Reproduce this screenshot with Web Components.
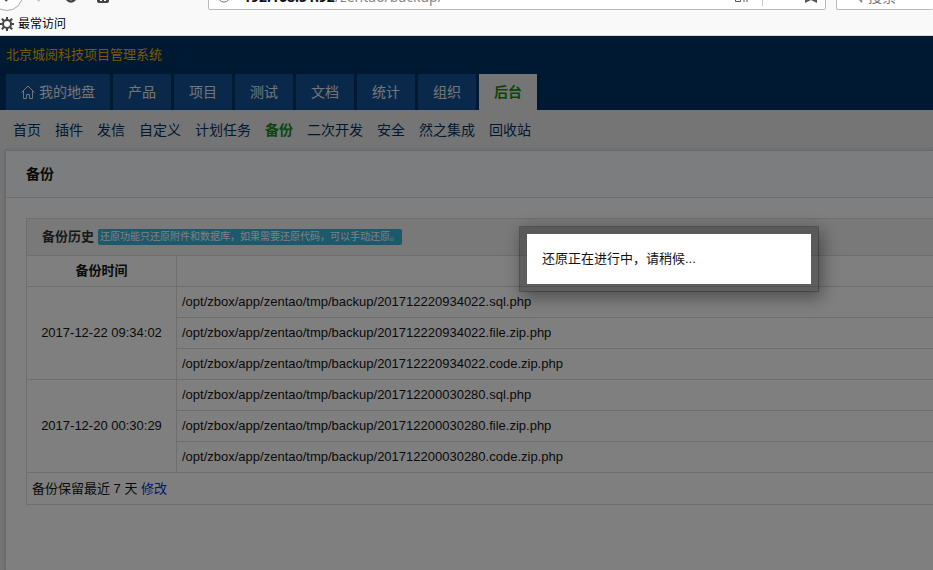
<!DOCTYPE html>
<html lang="zh-CN">
<head>
<meta charset="utf-8">
<title>备份 - 北京城阅科技项目管理系统</title>
<style>
  html, body {
    margin: 0;
    min-height: 100%;
  }

  body {
    font-family: "Liberation Sans", "Noto Sans CJK SC", sans-serif;
    font-size: 13px;
    line-height: 20px;
    color: #141414;
  }
</style>
</head>
<body>
<backup-page></backup-page>

<script>
/**
 * Browser chrome: the lower edge of the address bar and the bookmarks row
 */
class BrowserBar extends HTMLElement {
  constructor() {
    super();
    this.attachShadow({ mode: 'open' });
  }

  connectedCallback() {
    this.shadowRoot.innerHTML = `
      <style>
        :host {
          display: block;
          flex: none;
          height: 35px;
          background: #f9f9f9;
          border-bottom: 1px solid #d9d9d9;
          overflow: hidden;
        }

        .toolbar {
          display: flex;
          align-items: flex-end;
          height: 11px;
          overflow: hidden;
        }

        .buttons {
          flex: none;
          width: 208px;
          height: 11px;
        }

        .field {
          display: flex;
          align-items: center;
          box-sizing: border-box;
          height: 26px;
          margin-bottom: 1px;
          flex: none;
          border: 1px solid #bbb;
          border-radius: 2px;
          background: white;
        }

        .address {
          flex: 1;
          min-width: 0;
          margin-right: 10px;
          padding: 0 7px 0 8px;
          gap: 12px;
        }

        .search {
          width: 97px;
          border-right: none;
          padding-left: 18px;
          gap: 5px;
        }

        input {
          border: none;
          padding: 0;
          min-width: 0;
          background: none;
          font: 14px/20px "Liberation Sans", "Noto Sans CJK SC", sans-serif;
          width: 60px;
        }

        .url {
          flex: 1;
          font-family: "Noto Sans", sans-serif;
          font-size: 14px;
          color: #888;
          white-space: nowrap;
        }

        .url b {
          color: #111;
        }

        .divider {
          width: 1px;
          height: 18px;
          background: #ccc;
        }

        svg {
          display: block;
          flex: none;
        }

        .bookmarks {
          display: flex;
          align-items: center;
          gap: 4px;
          height: 26px;
          font-size: 12px;
          color: #000;
        }

        .bookmarks a {
          color: inherit;
          text-decoration: none;
        }
      </style>

      <div class="toolbar">
        <svg class="buttons" viewBox="0 0 208 11">
          <circle cx="7" cy="-5" r="15.500" fill="#fdfdfd" stroke="#aaa"/>
          <path d="M2-4 L7 1" stroke="#444" stroke-width="2"/>
          <path d="M38 1 L42-3" stroke="#bbb" stroke-width="2"/>
          <circle cx="71" cy="-3" r="4.500" fill="none" stroke="#444" stroke-width="2.500"/>
          <path d="M97-4h12v5a2 2 0 0 1-2 2h-8a2 2 0 0 1-2-2z" fill="#444"/>
          <path d="M100 1v-2h2v2zM104 1v-2h2v2z" fill="#f9f9f9"/>
        </svg>
        <div class="field address">
          <svg width="14" height="14" viewBox="0 0 14 14"><circle cx="7" cy="6" r="6" fill="none" stroke="#777"/></svg>
          <span class="url"><b>192.168.51.92</b>/zentao/backup/</span>
          <svg width="16" height="14" viewBox="0 0 16 14" fill="none" stroke="#555"><path d="M1.500 6.500h5v5h-5zM1.500.5h5v4h-5zM10 12V7h3v5"/></svg>
          <span class="divider"></span>
          <svg width="43" height="14" viewBox="0 0 43 14"><path d="M30 0h12v13l-6-3-6 3z" fill="#555"/></svg>
        </div>
        <div class="field search">
          <svg width="8" height="14" viewBox="0 0 8 14"><path d="M2 6l5 6" stroke="#888" stroke-width="2"/></svg>
          <input type="text" placeholder="搜索" aria-label="搜索">
        </div>
      </div>
      <div class="bookmarks">
        <svg width="14" height="14" viewBox="-7 -7 14 14">
          <circle r="4" fill="none" stroke="#444" stroke-width="2"/>
          <path d="M0-4.500V-7M0 4.500V7M4.500 0H7M-4.500 0H-7M3.200-3.200l2-2M-3.200-3.200l-2-2M3.200 3.200l2 2M-3.200 3.200l-2 2" stroke="#444" stroke-width="2"/>
        </svg>
        <a href="#">最常访问</a>
      </div>
    `;
  }
}

/**
 * Main menu tab
 */
class MenuTab extends HTMLElement {
  constructor() {
    super();
    this.attachShadow({ mode: 'open' });
  }

  connectedCallback() {
    this.shadowRoot.innerHTML = `
      <style>
        :host {
          display: block;
        }

        a {
          display: flex;
          align-items: center;
          gap: 4px;
          height: 36px;
          padding: 0 15px;
          background: #145294;
          color: #e8eaec;
          font-size: 14px;
          text-decoration: none;
          white-space: nowrap;
        }

        :host([active]) a {
          background: #ebebeb;
          color: #1a8a1a;
          font-weight: 700;
        }
      </style>
      <a href="#"><slot></slot></a>
    `;
  }
}

class SiteHeader extends HTMLElement {
  constructor() {
    super();
    this.attachShadow({ mode: 'open' });
  }

  connectedCallback() {
    const tabs = ['产品', '项目', '测试', '文档', '统计', '组织'];
    const modules = ['首页', '插件', '发信', '自定义', '计划任务', '备份', '二次开发', '安全', '然之集成', '回收站'];

    this.shadowRoot.innerHTML = `
      <style>
        :host {
          display: block;
        }

        header {
          background: #003366;
        }

        .company {
          padding: 9px 6px;
          color: #f0b400;
        }

        .tabs {
          display: flex;
          gap: 3px;
          padding-left: 6px;
        }

        .modules {
          display: flex;
          gap: 14px;
          padding: 10px 13px;
          background: #ebebeb;
          font-size: 14px;
        }

        .modules a {
          color: #003366;
          text-decoration: none;
          white-space: nowrap;
        }

        .modules a.active {
          color: #1a8a1a;
          font-weight: 700;
        }
      </style>
      <header>
        <div class="company">北京城阅科技项目管理系统</div>
        <nav class="tabs">
          <menu-tab>
            <svg width="14" height="14" viewBox="0 0 14 14" fill="none" stroke="#e8eaec"><path d="M.5 7.500L7 1l6.500 6.500M2.500 6v7.500h3v-4h3v4h3V6"/></svg>
            我的地盘
          </menu-tab>
          ${tabs.map(tab => `<menu-tab>${tab}</menu-tab>`).join('')}
          <menu-tab active>后台</menu-tab>
        </nav>
      </header>
      <nav class="modules">
        ${modules.map(name => `<a href="#"${name === '备份' ? ' class="active"' : ''}>${name}</a>`).join('')}
      </nav>
    `;
  }
}

class BackupTable extends HTMLElement {
  constructor() {
    super();
    this.attachShadow({ mode: 'open' });
    this.backups = [
      { time: '2017-12-22 09:34:02', name: '201712220934022' },
      { time: '2017-12-20 00:30:29', name: '201712200030280' }
    ];
  }

  connectedCallback() {
    this.shadowRoot.innerHTML = `
      <style>
        :host {
          display: block;
          border: 1px solid #ddd;
          border-right: none;
        }

        .heading {
          display: flex;
          align-items: center;
          gap: 4px;
          height: 36px;
          padding-left: 15px;
          background: #f3f3f3;
          color: #333;
          font-weight: 700;
        }

        .label {
          padding: 0 2px;
          border-radius: 2px;
          background: #39b3d7;
          color: white;
          font-size: 10px;
          font-weight: 400;
          line-height: 16px;
          white-space: nowrap;
        }

        table {
          width: 100%;
          border-collapse: collapse;
        }

        th, td {
          height: 20px;
          padding: 5px;
          border-top: 1px solid #ddd;
          text-align: left;
        }

        th:first-child, .time {
          width: 139px;
          border-right: 1px solid #ddd;
          text-align: center;
        }

        tfoot td {
          height: 21px;
        }

        a {
          color: #0033cc;
          text-decoration: none;
        }
      </style>
      <div class="heading">
        备份历史
        <span class="label">还原功能只还原附件和数据库，如果需要还原代码，可以手动还原。</span>
      </div>
      <table>
        <thead>
          <tr><th scope="col">备份时间</th><th></th></tr>
        </thead>
        <tbody>${this.backups.map(backup => this.renderBackup(backup)).join('')}</tbody>
        <tfoot>
          <tr><td colspan="2">备份保留最近 7 天 <a href="#">修改</a></td></tr>
        </tfoot>
      </table>
    `;
  }

  renderBackup({ time, name }) {
    return ['sql', 'file.zip', 'code.zip'].map((type, i) => `
      <tr>
        ${i === 0 ? `<td class="time" rowspan="3">${time}</td>` : ''}
        <td>/opt/zbox/app/zentao/tmp/backup/${name}.${type}.php</td>
      </tr>
    `).join('');
  }
}

/**
 * Dimmed backdrop with the progress message on top of the page
 */
class WaitModal extends HTMLElement {
  constructor() {
    super();
    this.attachShadow({ mode: 'open' });
  }

  connectedCallback() {
    this.shadowRoot.innerHTML = `
      <style>
        :host {
          position: absolute;
          inset: 0;
          background: rgba(0, 0, 0, 0.5);
        }

        .dialog {
          position: absolute;
          top: 190px;
          left: 519px;
          box-sizing: border-box;
          width: 300px;
          border: 8px solid rgba(0, 0, 0, 0.25);
          background: white;
          background-clip: padding-box;
          box-shadow: 3px 5px 16px rgba(0, 0, 0, 0.4);
          padding: 15px;
        }
      </style>
      <div class="dialog" role="dialog"><slot></slot></div>
    `;
  }
}

class BackupPage extends HTMLElement {
  constructor() {
    super();
    this.attachShadow({ mode: 'open' });
  }

  connectedCallback() {
    this.shadowRoot.innerHTML = `
      <style>
        :host {
          display: flex;
          flex-direction: column;
          min-height: 100vh;
        }

        .site {
          position: relative;
          display: flex;
          flex-direction: column;
          flex: 1;
          background: #ebebeb;
          overflow: hidden;
        }

        main {
          flex: 1;
          margin-left: 5px;
          border: 1px solid #d4d4d4;
          border-width: 1px 0 0 1px;
          background: white;
          box-shadow: 0 0 4px rgba(0, 0, 0, 0.15);
        }

        h1 {
          margin: 0;
          padding: 13px 20px;
          border-bottom: 1px solid #ddd;
          background: #f8fafe;
          font-size: 14px;
        }

        backup-table {
          margin: 20px 0 20px 20px;
        }
      </style>
      <browser-bar></browser-bar>
      <div class="site">
        <site-header></site-header>
        <main>
          <h1>备份</h1>
          <backup-table></backup-table>
        </main>
        <wait-modal>还原正在进行中，请稍候...</wait-modal>
      </div>
    `;
  }
}

customElements.define('browser-bar', BrowserBar);
customElements.define('menu-tab', MenuTab);
customElements.define('site-header', SiteHeader);
customElements.define('backup-table', BackupTable);
customElements.define('wait-modal', WaitModal);
customElements.define('backup-page', BackupPage);
</script>
</body>
</html>
